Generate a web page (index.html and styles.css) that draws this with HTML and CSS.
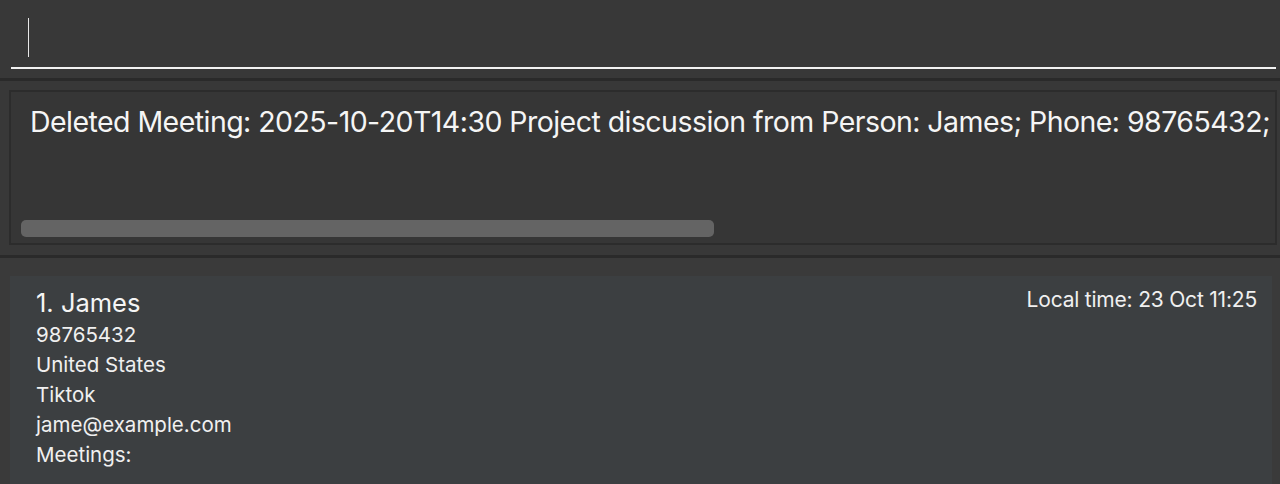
FILE: index.html
```html
<!DOCTYPE html>
<html>
<head>
<meta charset="utf-8">
<link rel="stylesheet" href="styles.css">
</head>
<body>
<div class="app">
  <section class="command">
    <div class="command-field">
      <span class="caret"></span>
    </div>
  </section>
  <div class="sep"></div>
  <section class="result">
    <div class="result-box">
      <div class="result-text">Deleted Meeting: 2025-10-20T14:30 Project discussion from Person: James; Phone: 98765432;</div>
      <div class="scroll-track"><div class="scroll-thumb"></div></div>
    </div>
  </section>
  <div class="sep"></div>
  <section class="list">
    <div class="card">
      <div class="card-main">
        <div class="name">1. James</div>
        <div class="line">98765432</div>
        <div class="line">United States</div>
        <div class="line">Tiktok</div>
        <div class="line">jame@example.com</div>
        <div class="line">Meetings:</div>
      </div>
      <div class="local-time">Local time: 23 Oct 11:25</div>
    </div>
  </section>
</div>
</body>
</html>
```

FILE: styles.css
```css
html, body {
  margin: 0;
  padding: 0;
  height: 100%;
  background: #383838;
  overflow: hidden;
}
.app {
  font-family: Inter, "Noto Sans", sans-serif;
  color: #ffffff;
  display: flex;
  flex-direction: column;
  height: 484px;
}
.command {
  height: 78px;
  padding: 0 4px 0 11px;
  box-sizing: border-box;
  background: #383838;
}
.command-field {
  height: 69px;
  border-bottom: 2px solid #f2f2f2;
  box-sizing: border-box;
  padding: 18px 0 0 17px;
}
.caret {
  display: block;
  width: 1px;
  height: 39px;
  background: #e8e8e8;
}
.sep {
  height: 3px;
  background: #2a2a2a;
}
.result {
  height: 174px;
  box-sizing: border-box;
  padding: 9px 3px 10px 9px;
  background: #383838;
}
.result-box {
  height: 100%;
  box-sizing: border-box;
  border: 2px solid #2c2c2c;
  background: #363636;
  display: flex;
  flex-direction: column;
  padding: 10px 10px 6px 10px;
  overflow: hidden;
}
.result-text {
  font-size: 28.5px;
  line-height: 40px;
  white-space: nowrap;
  padding-left: 9px;
  letter-spacing: -0.55px;
  color: #f5f5f5;
}
.scroll-track {
  margin-top: auto;
  height: 17px;
}
.scroll-thumb {
  width: 693px;
  height: 17px;
  border-radius: 5px;
  background: #646464;
}
.list {
  flex: 1;
  background: #3a3a3a;
  padding: 18px 8px 0 10px;
}
.card {
  background: #3c3f41;
  height: 100%;
  display: flex;
  justify-content: space-between;
  padding: 10px 15px 0 26px;
  box-sizing: border-box;
}
.name {
  font-size: 25.5px;
  line-height: 34px;
  color: #f5f5f5;
}
.line {
  font-size: 20.5px;
  line-height: 30px;
  color: #f0f0f0;
}
.local-time {
  font-size: 21px;
  line-height: 28px;
  letter-spacing: -0.2px;
  color: #f0f0f0;
}
```
